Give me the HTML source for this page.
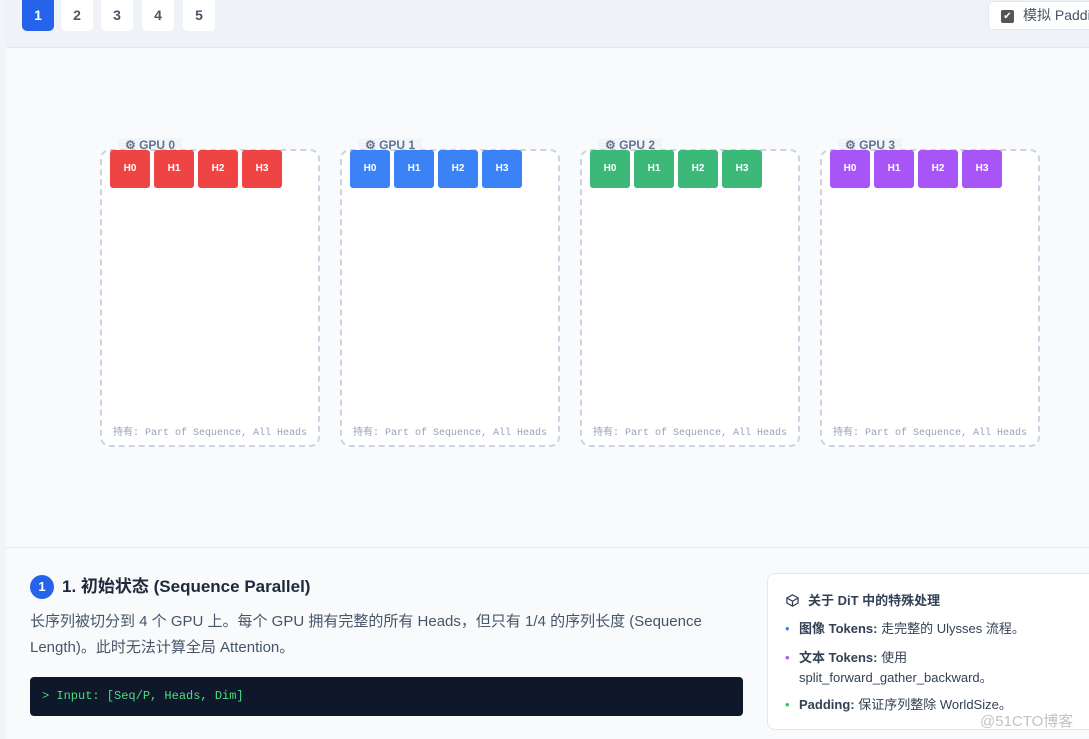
<!DOCTYPE html>
<html><head><meta charset="utf-8"><style>
*{box-sizing:border-box;margin:0;padding:0}
body{width:1089px;height:739px;overflow:hidden;background:#f8fafc;font-family:"Liberation Sans","Noto Sans CJK SC",sans-serif;position:relative}
.top{position:absolute;left:6px;top:0;width:1083px;height:48px;background:#eff3f8;border-bottom:1px solid #e2e8f0}
.strip{position:absolute;left:0;top:0;width:6px;height:739px;background:#f1f5f9}
.pg{position:absolute;top:0;width:32px;height:31px;border-radius:0 0 5px 5px;background:#fff;color:#475569;font-size:14px;font-weight:bold;text-align:center;line-height:31px}
.pg.a{background:#2563eb;color:#fff}
.chk{position:absolute;left:988px;top:1px;width:130px;height:29px;background:#fff;border:1px solid #e2e8f0;border-radius:5px;font-size:14px;color:#475569;line-height:27px;padding-left:34px;white-space:nowrap;overflow:hidden}
.chk i{position:absolute;left:12px;top:8px;width:13px;height:13px;background:#555;border-radius:2px;color:#fff;font-size:10px;line-height:13px;text-align:center;font-style:normal}
.main{position:absolute;left:6px;top:49px;width:1083px;height:499px;background:#f8fafc;border-bottom:1px solid #e2e8f0}
.gpu{position:absolute;top:149px;width:220px;height:298px;border:2px dashed #cbd5e1;border-radius:10px;background:#fff}
.lab{position:absolute;top:138px;height:14px;background:#f1f5f9;font-size:12px;font-weight:bold;color:#64748b;padding:0 7px;line-height:14px;white-space:nowrap}
.h{position:absolute;top:-1px;width:40px;height:38px;border-radius:3px;color:#fff;font-size:10px;font-weight:bold;text-align:center;line-height:38px}
.ft{position:absolute;left:11px;top:272px;font-family:"Liberation Mono","Noto Sans CJK SC",monospace;font-size:10px;color:#94a3b8;white-space:nowrap}
.bot{position:absolute;left:6px;top:549px;width:1083px;height:190px;background:#f8fafc}
</style></head><body>
<div class="strip"></div>
<div class="top"></div>
<div class="pg a" style="left:22px">1</div>
<div class="pg" style="left:61px">2</div>
<div class="pg" style="left:101px">3</div>
<div class="pg" style="left:142px">4</div>
<div class="pg" style="left:183px">5</div>
<div class="chk"><i>✔</i>模拟 Padding</div>
<div class="main"></div>

<div class="lab" style="left:118px">⚙ GPU 0</div>
<div class="gpu" style="left:100px">
<div class="h" style="left:8px;background:#ef4444">H0</div><div class="h" style="left:52px;background:#ef4444">H1</div><div class="h" style="left:96px;background:#ef4444">H2</div><div class="h" style="left:140px;background:#ef4444">H3</div>
<div class="ft">持有: Part of Sequence, All Heads</div></div>

<div class="lab" style="left:358px">⚙ GPU 1</div>
<div class="gpu" style="left:340px">
<div class="h" style="left:8px;background:#3b82f6">H0</div><div class="h" style="left:52px;background:#3b82f6">H1</div><div class="h" style="left:96px;background:#3b82f6">H2</div><div class="h" style="left:140px;background:#3b82f6">H3</div>
<div class="ft">持有: Part of Sequence, All Heads</div></div>

<div class="lab" style="left:598px">⚙ GPU 2</div>
<div class="gpu" style="left:580px">
<div class="h" style="left:8px;background:#3cb878">H0</div><div class="h" style="left:52px;background:#3cb878">H1</div><div class="h" style="left:96px;background:#3cb878">H2</div><div class="h" style="left:140px;background:#3cb878">H3</div>
<div class="ft">持有: Part of Sequence, All Heads</div></div>

<div class="lab" style="left:838px">⚙ GPU 3</div>
<div class="gpu" style="left:820px">
<div class="h" style="left:8px;background:#a855f7">H0</div><div class="h" style="left:52px;background:#a855f7">H1</div><div class="h" style="left:96px;background:#a855f7">H2</div><div class="h" style="left:140px;background:#a855f7">H3</div>
<div class="ft">持有: Part of Sequence, All Heads</div></div>

<div class="bot"></div>
<div style="position:absolute;left:30px;top:575px;width:24px;height:24px;border-radius:50%;background:#2563eb;color:#fff;font-size:13px;font-weight:bold;text-align:center;line-height:24px">1</div>
<div style="position:absolute;left:62px;top:575px;font-size:17px;font-weight:bold;color:#1e293b;line-height:24px">1. 初始状态 (Sequence Parallel)</div>
<div style="position:absolute;left:30px;top:609px;width:720px;font-size:15px;color:#475569;line-height:26px">长序列被切分到 4 个 GPU 上。每个 GPU 拥有完整的所有 Heads，但只有 1/4 的序列长度 (Sequence Length)。此时无法计算全局 Attention。</div>
<div style="position:absolute;left:30px;top:677px;width:713px;height:39px;background:#0f172a;border-radius:4px;font-family:'Liberation Mono',monospace;font-size:12px;color:#4ade80;line-height:39px;padding-left:12px">&gt; Input: [Seq/P, Heads, Dim]</div>

<div style="position:absolute;left:767px;top:573px;width:340px;height:157px;background:#fff;border:1px solid #e2e8f0;border-radius:8px;padding:18px 0 0 17px;color:#334155;font-size:13px">
<div style="font-weight:bold;line-height:18px"><svg width="15" height="15" viewBox="0 0 24 24" fill="none" stroke="#334155" stroke-width="2" style="vertical-align:-3px;margin-right:8px"><path d="M21 8l-9-5-9 5v8l9 5 9-5z M3 8l9 5 9-5 M12 13v8"/></svg>关于 DiT 中的特殊处理</div>
<div style="position:relative;margin-top:10px;padding-left:14px;line-height:18px"><span style="position:absolute;left:0;top:0;color:#3b82f6">•</span><b>图像 Tokens:</b> 走完整的 Ulysses 流程。</div>
<div style="position:relative;margin-top:10px;padding-left:14px;line-height:20px;width:300px"><span style="position:absolute;left:0;top:0;color:#a855f7">•</span><b>文本 Tokens:</b> 使用<br>split_forward_gather_backward。</div>
<div style="position:relative;margin-top:8px;padding-left:14px;line-height:18px"><span style="position:absolute;left:0;top:0;color:#22c55e">•</span><b>Padding:</b> 保证序列整除 WorldSize。</div>
</div>
<div style="position:absolute;left:980px;top:710px;font-size:15px;color:rgba(180,180,180,0.8)">@51CTO博客</div>
</body></html>
